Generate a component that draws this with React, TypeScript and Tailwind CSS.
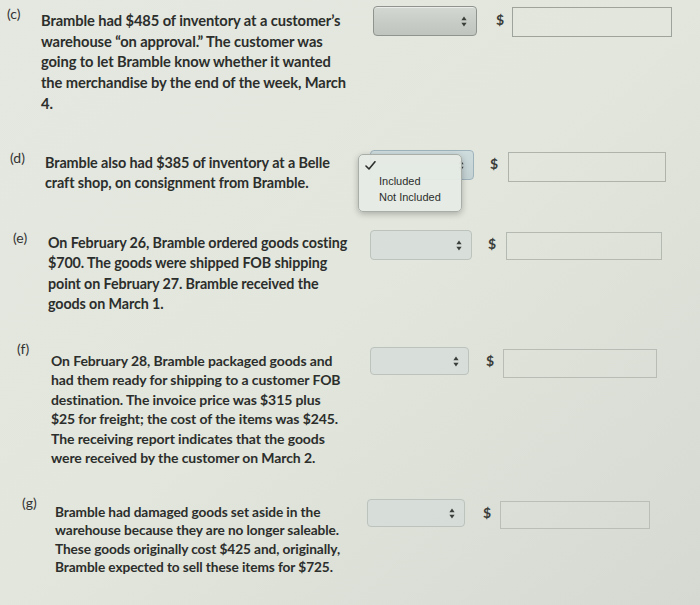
import React from "react";

type Row = {
  label: string;
  lines: string[];
  rowClass: string;
  labelClass: string;
  textClass: string;
  selectClass: string;
  dollarClass: string;
  inputClass: string;
  selectTone: "dark" | "focus" | "light";
};

const rows: Row[] = [
  {
    label: "(c)",
    lines: [
      "Bramble had $485 of inventory at a customer’s",
      "warehouse “on approval.” The customer was",
      "going to let Bramble know whether it wanted",
      "the merchandise by the end of the week, March",
      "4.",
    ],
    rowClass: "h-[150px] pt-[6px] pl-[7px]",
    labelClass: "w-[34px] pt-[0px]",
    textClass: "w-[332px] pt-[4px] leading-[20.7px] text-[14.7px]",
    selectClass: "w-[104px] h-[30px]",
    dollarClass: "ml-[19px] mt-[5px]",
    inputClass: "ml-[8px] mt-[1px] w-[160px] h-[30px] border-[#9ea39c]",
    selectTone: "dark",
  },
  {
    label: "(d)",
    lines: [
      "Bramble also had $385 of inventory at a Belle",
      "craft shop, on consignment from Bramble.",
    ],
    rowClass: "h-[80px] pl-[10px]",
    labelClass: "w-[35px] pt-[0px]",
    textClass: "w-[325px] pt-[3px] leading-[20px] text-[14.4px]",
    selectClass: "w-[104px] h-[30px]",
    dollarClass: "ml-[16px] mt-[5px]",
    inputClass: "ml-[10px] mt-[2px] w-[158px] h-[30px] border-[#aeb3ab]",
    selectTone: "focus",
  },
  {
    label: "(e)",
    lines: [
      "On February 26, Bramble ordered goods costing",
      "$700. The goods were shipped FOB shipping",
      "point on February 27. Bramble received the",
      "goods on March 1.",
    ],
    rowClass: "h-[117px] pl-[13px]",
    labelClass: "w-[35px] pt-[0px]",
    textClass: "w-[322px] pt-[3px] leading-[20.3px] text-[14.3px]",
    selectClass: "w-[102px] h-[30px]",
    dollarClass: "ml-[16px] mt-[5px]",
    inputClass: "ml-[10px] mt-[2px] w-[156px] h-[28px] border-[#b4b9b1]",
    selectTone: "light",
  },
  {
    label: "(f)",
    lines: [
      "On February 28, Bramble packaged goods and",
      "had them ready for shipping to a customer FOB",
      "destination. The invoice price was $315 plus",
      "$25 for freight; the cost of the items was $245.",
      "The receiving report indicates that the goods",
      "were received by the customer on March 2.",
    ],
    rowClass: "h-[152px] pl-[17px]",
    labelClass: "w-[34px] -mt-[6px]",
    textClass: "w-[319px] pt-[4px] leading-[19.4px] text-[14px]",
    selectClass: "w-[99px] h-[28px]",
    dollarClass: "ml-[17px] mt-[5px]",
    inputClass: "ml-[9px] mt-[2px] w-[154px] h-[29px] border-[#b8bcb5]",
    selectTone: "light",
  },
  {
    label: "(g)",
    lines: [
      "Bramble had damaged goods set aside in the",
      "warehouse because they are no longer saleable.",
      "These goods originally cost $425 and, originally,",
      "Bramble expected to sell these items for $725.",
    ],
    rowClass: "h-[106px] pl-[22px]",
    labelClass: "w-[33px] -mt-[4px]",
    textClass: "w-[312px] pt-[4px] leading-[18.4px] text-[13.7px]",
    selectClass: "w-[98px] h-[28px]",
    dollarClass: "ml-[18px] mt-[5px]",
    inputClass: "ml-[9px] mt-[2px] w-[150px] h-[28px] border-[#babeb7]",
    selectTone: "light",
  },
];

function Arrows() {
  return (
    <svg width="6" height="11" viewBox="0 0 6 11" className="shrink-0">
      <path d="M3 0.5 L5.6 4.2 L0.4 4.2 Z" fill="#3b3f3b" />
      <path d="M3 10.5 L5.6 6.8 L0.4 6.8 Z" fill="#3b3f3b" />
    </svg>
  );
}

function FakeSelect({ tone, className }: { tone: Row["selectTone"]; className: string }) {
  const toneClass =
    tone === "dark"
      ? "border-[#8f948e] bg-linear-to-b from-[#d3d8d2] via-[#c8cec7] to-[#bfc5be] shadow-[inset_0_1px_0_rgba(255,255,255,0.5)]"
      : tone === "focus"
        ? "border-[#9fb3bd] bg-linear-to-b from-[#cfdcde] to-[#c3d1d3]"
        : "border-[#bcc2bc] bg-[#d4dcd8]/70";
  return (
    <div className={`shrink-0 flex items-center justify-end rounded-[4px] border pr-[9px] ${toneClass} ${className}`}>
      <Arrows />
    </div>
  );
}

function Dropdown() {
  return (
    <div className="absolute left-[-12px] top-[4px] w-[104px] h-[58px] rounded-[5px] border border-[#a9aea8] bg-[#e6ebe5]/95 shadow-[0_2px_6px_rgba(0,0,0,0.25)] font-['Liberation_Sans',sans-serif] text-[11px] text-[#2b2e2b] leading-[16px]">
      <div className="pl-[6px] pt-[6px] h-[18px]">
        <svg width="11" height="9" viewBox="0 0 11 9">
          <path d="M1 5 L4 8 L10 0.8" fill="none" stroke="#2b2e2b" strokeWidth="1.6" strokeLinecap="round" strokeLinejoin="round" />
        </svg>
      </div>
      <div className="pl-[20px]">Included</div>
      <div className="pl-[20px]">Not Included</div>
    </div>
  );
}

export default function App() {
  return (
    <div className="w-[700px] h-[605px] overflow-hidden bg-linear-to-br from-[#e4e8e1] via-[#e2e6dc] to-[#d5d9d2] font-['Lato',sans-serif] text-[#2c2e2c]">
      {rows.map((row) => (
        <div key={row.label} className={`flex items-start ${row.rowClass}`}>
          <div className={`shrink-0 text-[14px] leading-[16px] text-[#333] ${row.labelClass}`}>{row.label}</div>
          <div className={`shrink-0 font-bold tracking-[-0.1px] ${row.textClass}`}>
            {row.lines.map((line) => (
              <div key={line} className="whitespace-nowrap">
                {line}
              </div>
            ))}
          </div>
          <div className="relative shrink-0">
            <FakeSelect tone={row.selectTone} className={row.selectClass} />
            {row.selectTone === "focus" && <Dropdown />}
          </div>
          <div className={`shrink-0 font-bold text-[14px] leading-[18px] text-[#3a3d3a] ${row.dollarClass}`}>$</div>
          <div className={`shrink-0 border ${row.inputClass}`} />
        </div>
      ))}
    </div>
  );
}
